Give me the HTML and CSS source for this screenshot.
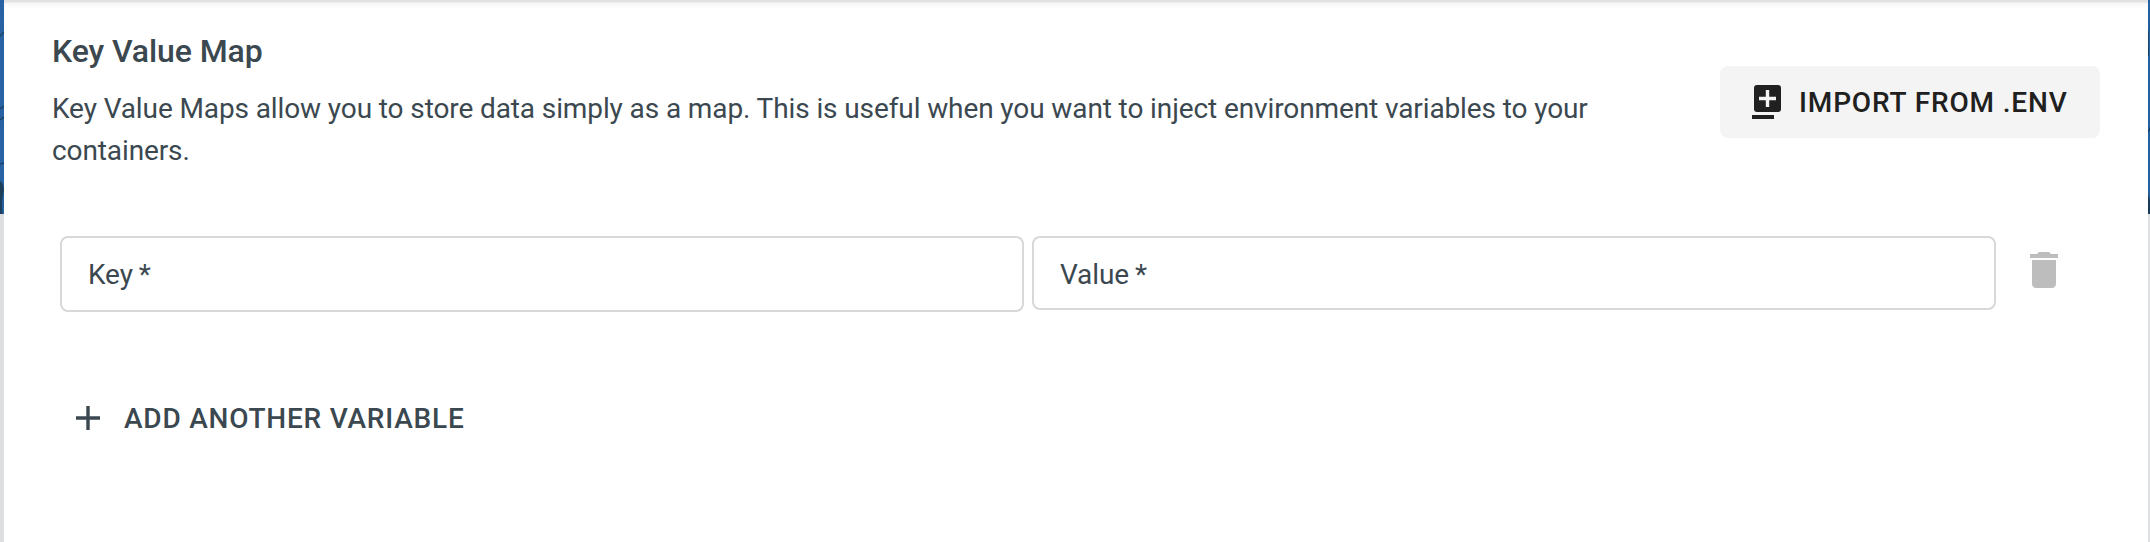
FILE: index.html
```html
<!DOCTYPE html>
<html lang="en">
<head>
<meta charset="utf-8">
<title>Key Value Map</title>
<link rel="stylesheet" href="styles.css">
</head>
<body>
<div class="page">
  <svg class="edge" width="4" height="214" viewBox="0 0 4 214" aria-hidden="true">
    <rect width="4" height="214" fill="#2862a4"/>
    <path d="M0 36L4 32M0 109L4 106M0 120L4 117M0 164L4 163" stroke="#1c4264" stroke-width="1.5"/>
    <path d="M0 181Q3 182 4 190Q1 201 2.500 214H0Z" fill="#1c3f5b"/>
  </svg>
  <main class="panel">
    <header class="header">
      <div class="intro">
        <h1 class="title">Key Value Map</h1>
        <p class="description">Key Value Maps allow you to store data simply as a map. This is useful when you want to inject environment variables to your containers.</p>
      </div>
      <button class="button import" type="button">
        <svg class="import-icon" width="30" height="36" viewBox="0 0 30 36" aria-hidden="true">
          <rect x="2" y="1" width="27" height="27" rx="3" fill="currentColor"/>
          <path d="M15.500 6v17M7 14.500h17" stroke="#f4f4f4" stroke-width="3.400"/>
          <path d="M0 33h22" stroke="currentColor" stroke-width="4"/>
        </svg>
        <span class="label">IMPORT FROM .ENV</span>
      </button>
    </header>
    <div class="row">
      <label class="field field-key">Key<span class="required">*</span></label>
      <label class="field field-value">Value<span class="required">*</span></label>
      <button class="delete" type="button" aria-label="Delete">
        <svg width="48" height="48" viewBox="0 0 24 24" fill="currentColor"><path d="M6 19c0 1.100.9 2 2 2h8c1.100 0 2-.9 2-2V7H6v12zM19 4h-3.500l-1-1h-5l-1 1H5v2h14V4z"/></svg>
      </button>
    </div>
    <button class="button add" type="button">
      <svg width="40" height="40" viewBox="0 0 40 40" aria-hidden="true"><path d="M20 8v24M8 20h24" stroke="currentColor" stroke-width="3.400"/></svg>
      <span class="label">ADD ANOTHER VARIABLE</span>
    </button>
  </main>
  <svg class="edge" width="2" height="214" viewBox="0 0 2 214" aria-hidden="true">
    <rect width="2" height="214" fill="#2460a2"/>
    <path d="M2 20Q0 35 1 56H0V35ZM0 131L2 127V130L0 133ZM0 194L2 200V214H0Z" fill="#183b59"/>
  </svg>
</div>
</body>
</html>
```
FILE: styles.css
```css
* { box-sizing: border-box; }

body {
  margin: 0;
  background: #dcdee0;
  color: #3b4850;
  font-family: Roboto, sans-serif;
  font-size: 28px;
}

.page {
  display: flex;
  align-items: flex-start;
  height: 542px;
  overflow: hidden;
}

.edge { display: block; flex: none; }

.panel {
  flex: 1;
  height: 542px;
  padding: 29px 48px 0;
  background: linear-gradient(#e0e0e0 0, #e3e3e3 2px, #f6f6f6 3px, #fff 9px);
}

.header {
  display: flex;
  justify-content: space-between;
  align-items: flex-start;
}

.intro { width: 1560px; }

.title {
  margin: 0;
  font-size: 32px;
  line-height: 44px;
  font-weight: 500;
  letter-spacing: -0.09px;
}

.description {
  margin: 15px 0 0;
  line-height: 42px;
  letter-spacing: -0.108px;
}

.button {
  display: flex;
  align-items: center;
  border: 0;
  font: 500 28px/40px Roboto, sans-serif;
  letter-spacing: 0.77px;
  white-space: nowrap;
}

.label { padding-top: 2px; }

.import {
  width: 380px;
  height: 72px;
  margin-top: 37px;
  padding: 0 0 0 32px;
  gap: 17px;
  border-radius: 8px;
  background: #f4f4f4;
  color: #202020;
  letter-spacing: 0.86px;
}

.import-icon { flex: none; }

.row {
  display: flex;
  align-items: flex-start;
  gap: 8px;
  margin-top: 64px;
  padding-left: 8px;
}

.field {
  width: 964px;
  padding: 0 26px;
  border: 2px solid #d8d8d8;
  border-radius: 8px;
  line-height: 74px;
  letter-spacing: -0.1px;
}

.field-key { height: 76px; }
.field-value { height: 74px; }

.required { margin-left: 6px; }

.delete {
  display: flex;
  margin: 10px 0 0 16px;
  padding: 0;
  border: 0;
  background: none;
  color: #bdbdbd;
}

.add {
  margin-top: 85px;
  padding: 0 0 0 16px;
  gap: 16px;
  background: none;
  color: #3b4850;
}
```
